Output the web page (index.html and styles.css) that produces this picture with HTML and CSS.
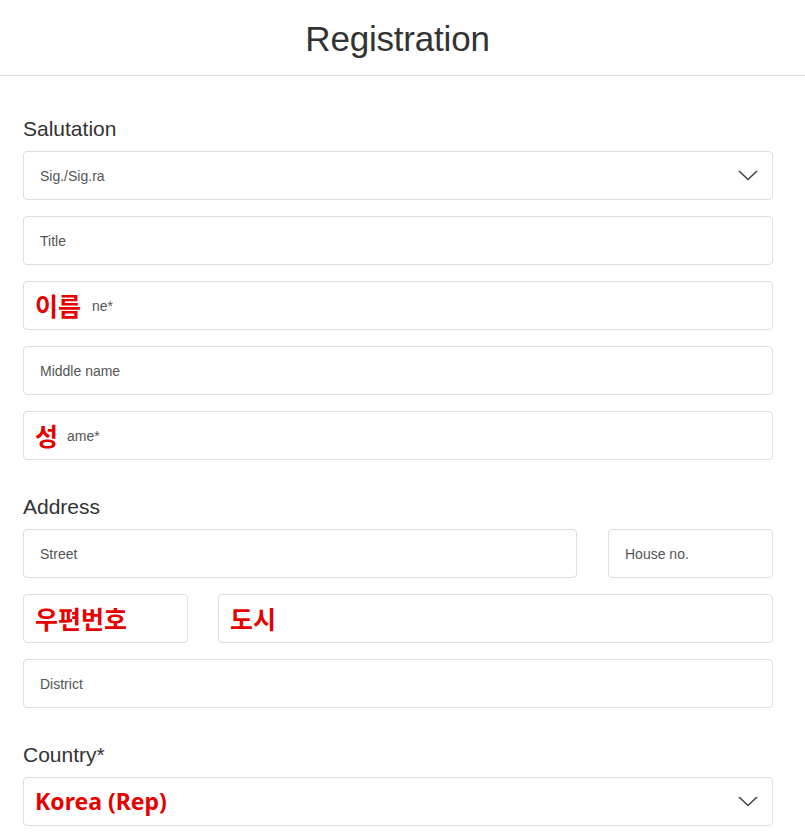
FILE: index.html
```html
<!DOCTYPE html>
<html lang="en">
<head>
<meta charset="utf-8">
<title>Registration</title>
<link rel="stylesheet" href="styles.css">
</head>
<body>
<header class="top">
  <h1 class="title">Registration</h1>
</header>
<main class="form">
  <section class="group">
    <div class="label">Salutation</div>
    <div class="stack">
      <div class="field select">
        <span class="ph">Sig./Sig.ra</span>
        <svg class="chev" width="20" height="11" viewBox="0 0 20 11"><polyline points="1,1 10,9.5 19,1" fill="none" stroke="#444" stroke-width="1.6"/></svg>
      </div>
      <div class="field"><span class="ph">Title</span></div>
      <div class="field"><span class="mark">이름</span><span class="ph ph-after">ne*</span></div>
      <div class="field"><span class="ph">Middle name</span></div>
      <div class="field"><span class="mark">성</span><span class="ph ph-after2">ame*</span></div>
    </div>
  </section>
  <section class="group">
    <div class="label">Address</div>
    <div class="stack">
      <div class="row row-a">
        <div class="field"><span class="ph">Street</span></div>
        <div class="field"><span class="ph">House no.</span></div>
      </div>
      <div class="row row-b">
        <div class="field"><span class="mark">우편번호</span></div>
        <div class="field"><span class="mark">도시</span></div>
      </div>
      <div class="field"><span class="ph">District</span></div>
    </div>
  </section>
  <section class="group">
    <div class="label">Country*</div>
    <div class="stack">
      <div class="field select">
        <span class="mark latin">Korea (Rep)</span>
        <svg class="chev" width="20" height="11" viewBox="0 0 20 11"><polyline points="1,1 10,9.5 19,1" fill="none" stroke="#444" stroke-width="1.6"/></svg>
      </div>
    </div>
  </section>
</main>
</body>
</html>
```

FILE: styles.css
```css
* { box-sizing: border-box; }
html, body { margin: 0; padding: 0; background: #fff; }
body {
  font-family: "Liberation Sans", Arial, sans-serif;
  color: #333;
}
.top {
  height: 76px;
  border-bottom: 1px solid #dcdcdc;
  display: flex;
  justify-content: center;
  align-items: center;
  padding: 2px 10px 0 0;
}
.title {
  margin: 0;
  font-size: 35px;
  font-weight: 400;
  color: #333;
  line-height: 40px;
  letter-spacing: -0.2px;
}
.form {
  padding: 42px 32px 0 23px;
  display: flex;
  flex-direction: column;
  gap: 36px;
}
.label {
  font-size: 21px;
  line-height: 21px;
  height: 21px;
  margin-bottom: 12px;
  color: #333;
}
.stack {
  display: flex;
  flex-direction: column;
  gap: 16px;
}
.row { display: grid; }
.row-a { grid-template-columns: 1fr 165px; column-gap: 31px; }
.row-b { grid-template-columns: 165px 1fr; column-gap: 30px; }
.field {
  height: 49px;
  border: 1px solid #dedede;
  border-radius: 4px;
  display: flex;
  align-items: center;
  padding: 0 14px 0 16px;
  background: #fff;
}
.ph {
  font-size: 14px;
  color: #555;
}
.mark {
  font-family: "Noto Sans CJK KR", "Noto Sans", sans-serif;
  font-weight: 700;
  font-size: 25px;
  color: #e60000;
  margin-left: -5px;
  line-height: 1;
}
.mark.latin {
  font-family: "Noto Sans", "Noto Sans CJK KR", sans-serif;
  font-size: 23px;
}
.ph-after { margin-left: 11px; }
.ph-after2 { margin-left: 9px; }
.select { justify-content: space-between; }
.chev { display: block; }
```
